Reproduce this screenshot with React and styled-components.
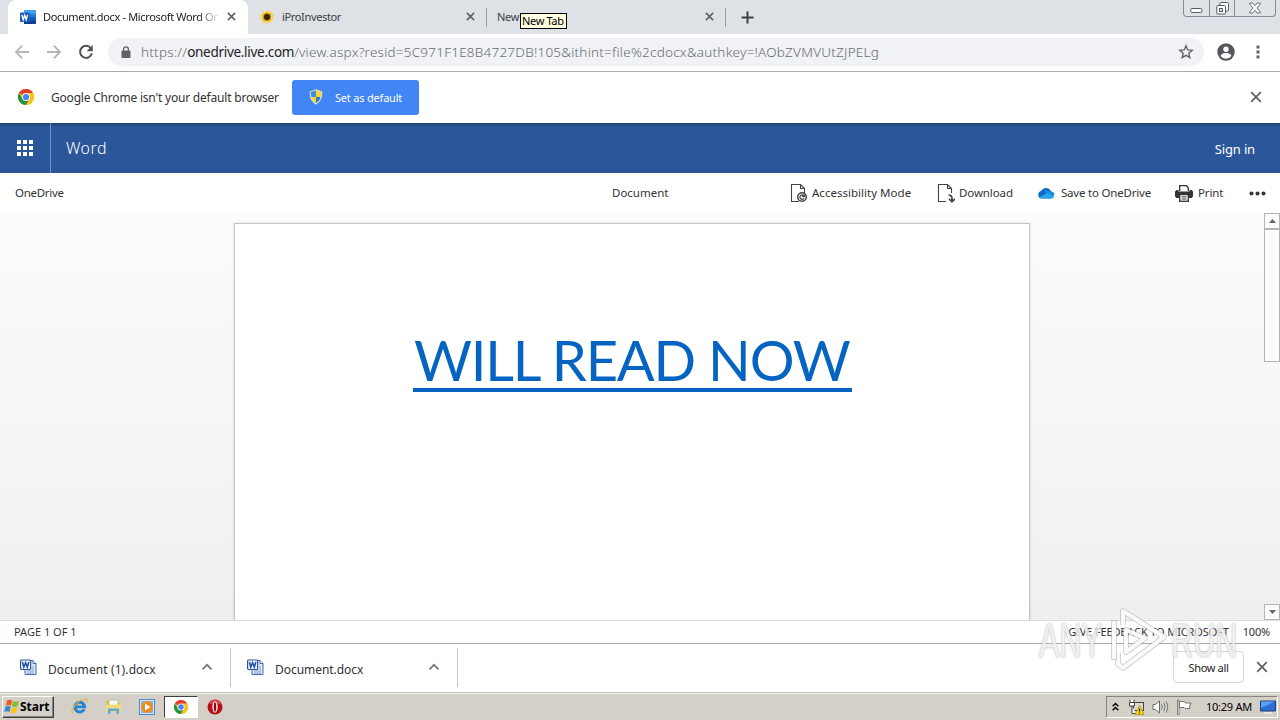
import React from 'react'
import styled, { createGlobalStyle } from 'styled-components'

const GlobalStyle = createGlobalStyle`
  * {
    box-sizing: border-box;
  }
  body {
    margin: 0;
    overflow: hidden;
    background: #fff;
    font-family: 'Noto Sans', 'Open Sans', sans-serif;
  }
  svg {
    display: block;
    flex: none;
  }
`

const WordIcon = () => (
  <svg width='16' height='16' viewBox='0 0 16 16'>
    <rect x='4' y='1' width='12' height='14' rx='1' fill='#2b7cd3' />
    <path d='M4 1h11a1 1 0 0 1 1 1v2.5H4z' fill='#41a5ee' />
    <path d='M4 8h12v3.500H4z' fill='#185abd' />
    <path d='M4 11.500h12V14a1 1 0 0 1-1 1H4z' fill='#103f91' />
    <rect x='0' y='3.500' width='9.500' height='9.500' rx='.8' fill='#185abd' />
    <path
      d='M1.800 5.800l1.400 5 1.500-4.600 1.500 4.600 1.400-5'
      fill='none'
      stroke='#fff'
      strokeWidth='1.300'
    />
  </svg>
)

const FlowerIcon = () => (
  <svg width='14' height='14' viewBox='0 0 14 14'>
    <path
      d='M7 0l1.600 2 2.600-.8.4 2.500 2.200 1-1 2.300 1 2.500-2.400.9-.6 2.400-2.400-.6L7 14l-1.700-1.700-2.500.4-.3-2.500-2.300-1L1.200 7l-1-2.400 2.400-.9.3-2.500 2.500.7z'
      fill='#f8cf4a'
    />
    <circle cx='7' cy='7' r='4' fill='#c58a1c' />
    <circle cx='7' cy='7' r='3' fill='#33240c' />
  </svg>
)

const CloseIcon = ({ size = 9, color = '#5f6368', weight = 1.8 }) => (
  <svg width={size} height={size} viewBox='0 0 10 10'>
    <path d='M1 1l8 8M9 1l-8 8' stroke={color} strokeWidth={weight} />
  </svg>
)

const ArrowIcon = ({ flip }) => (
  <svg width='16' height='16' viewBox='0 0 16 16'>
    <path
      d='M15 8H2M8.200 1.700L1.900 8l6.300 6.300'
      transform={flip ? 'rotate(180 8 8)' : undefined}
      fill='none'
      stroke='#b4b6b9'
      strokeWidth='1.800'
    />
  </svg>
)

const ReloadIcon = () => (
  <svg width='16' height='16' viewBox='0 0 16 16'>
    <path
      d='M12.900 4.300A6 6 0 1 0 13.900 9.300'
      fill='none'
      stroke='#505357'
      strokeWidth='2'
    />
    <path d='M14.800 1v6.200H8.600z' fill='#505357' />
  </svg>
)

const LockIcon = () => (
  <svg width='10' height='13' viewBox='0 0 10 13'>
    <rect x='.5' y='4.500' width='9' height='7.500' rx='1' fill='#5f6368' />
    <path
      d='M2.600 5V3.300a2.400 2.400 0 0 1 4.800 0V5'
      fill='none'
      stroke='#5f6368'
      strokeWidth='1.300'
    />
  </svg>
)

const StarIcon = () => (
  <svg width='16' height='16' viewBox='0 0 16 16'>
    <path
      d='M8 1.800l1.700 4.100 4.500.4-3.400 2.900 1 4.400L8 11.300l-3.800 2.300 1-4.400L1.800 6.300l4.500-.4z'
      fill='none'
      stroke='#5f6368'
      strokeWidth='1.400'
    />
  </svg>
)

const ProfileIcon = () => (
  <svg width='18' height='18' viewBox='0 0 18 18'>
    <circle cx='9' cy='9' r='8.700' fill='#54575b' />
    <circle cx='9' cy='6.200' r='2.700' fill='#fff' />
    <path d='M3.600 13c.4-2.300 3.400-3 5.400-3s5 .7 5.400 3A6.600 6.600 0 0 1 9 15.700 6.600 6.600 0 0 1 3.600 13z' fill='#fff' />
  </svg>
)

const ChromeIcon = ({ size = 16 }) => (
  <svg width={size} height={size} viewBox='0 0 16 16'>
    <circle cx='8' cy='8' r='8' fill='#fbc116' />
    <path d='M8 8L1.070 4A8 8 0 0 1 14.930 4z' fill='#e33b2e' />
    <path d='M1.070 4A8 8 0 0 0 8 16l3.500-6H4.500z' fill='#229342' />
    <path d='M8 4h6.930A8 8 0 0 1 8 16l3.460-6z' fill='#fbc116' />
    <circle cx='8' cy='8' r='4' fill='#fff' />
    <circle cx='8' cy='8' r='3.100' fill='#4285f4' />
  </svg>
)

const ShieldIcon = () => (
  <svg width='14' height='16' viewBox='0 0 14 16'>
    <path d='M7 .8L1.200 2.800c-.3 6 1.500 9.500 5.800 12.200z' fill='#3f8ce8' />
    <path d='M7 .8l5.800 2c.3 6-1.500 9.500-5.800 12.200z' fill='#fbd62e' />
    <path d='M1.200 8H7v7C3.600 13 1.800 10.800 1.200 8z' fill='#fbd62e' />
    <path d='M7 8h5.800c-.6 2.800-2.400 5-5.800 7z' fill='#3579d0' />
    <path
      d='M7 .8l5.800 2c.3 6-1.500 9.500-5.800 12.200C2.700 12.300.9 8.800 1.200 2.800z'
      fill='none'
      stroke='#d9e3c8'
      strokeWidth='1.100'
    />
  </svg>
)

const PageShape = () => (
  <path
    d='M9 17.500H1.500V.5h9l4 4V9M10.500.5v4h4'
    fill='none'
    stroke='#444'
    strokeWidth='1.100'
  />
)

const AccessibilityIcon = () => (
  <svg width='18' height='19' viewBox='0 0 18 19'>
    <PageShape />
    <circle cx='12' cy='13' r='4.300' fill='#fff' stroke='#444' strokeWidth='1.500' />
    <path d='M14 12a2.200 2.200 0 1 0 0 2.200M14.300 10.500v2h-2.200' fill='none' stroke='#444' strokeWidth='1.300' />
  </svg>
)

const DownloadIcon = () => (
  <svg width='18' height='19' viewBox='0 0 18 19'>
    <PageShape />
    <path d='M11.500 11c2.300 0 3.500 1.500 3.500 3.500v3M12 14.800l3 3 3-3' fill='none' stroke='#444' strokeWidth='1.700' />
  </svg>
)

const CloudIcon = () => (
  <svg width='18' height='12' viewBox='0 0 18 12'>
    <path d='M4 11.500a4 4 0 0 1 0-7.600A5.600 5.600 0 0 1 14 4.500a3.700 3.700 0 0 1 .3 7z' fill='#0f6cc4' />
    <path d='M6 3.500l8 1.100a3.700 3.700 0 0 1 3.500 3.200L14 9z' fill='#1490df' />
    <path d='M2 10.800L10 6l7.400 3.700a3.600 3.600 0 0 1-3.100 1.800H4a4 4 0 0 1-2-.7z' fill='#28a8ea' />
  </svg>
)

const PrintIcon = () => (
  <svg width='18' height='17' viewBox='0 0 18 17'>
    <path d='M4.700 6V.7h6.600l2 2V6' fill='#fff' stroke='#333' strokeWidth='1.300' />
    <path d='M1.500 5h2v1.500h11V5h2L18 6.500v5L16.500 13H14v-2.500H4V13H1.500L0 11.500v-5z' fill='#333' />
    <rect x='4.700' y='9.500' width='8.600' height='6.800' fill='#fff' stroke='#333' strokeWidth='1.300' />
    <path d='M6.500 11.800h5M6.500 14h5' stroke='#333' />
  </svg>
)

const DocIcon = () => (
  <svg width='17' height='17' viewBox='0 0 17 17'>
    <path d='M5 1.500h8l3 3v11H5z' fill='#dce8f8' stroke='#4468a8' />
    <path d='M13 1.500v3h3' fill='#fff' stroke='#4468a8' />
    <path d='M7 12h7M7 14h7M12 8h2M12 10h2' stroke='#7da2db' />
    <rect x='.6' y='1' width='10' height='9.500' rx='1' fill='#f3f7ff' stroke='#2b579a' strokeWidth='1.200' />
    <path d='M2.500 3l1.300 5.300L5.600 3.600l1.700 4.700L8.800 3' fill='none' stroke='#1d4fa3' strokeWidth='1.500' />
  </svg>
)

const ChevronIcon = () => (
  <svg width='12' height='8' viewBox='0 0 12 8'>
    <path d='M1.500 6.300L6 1.800l4.500 4.500' fill='none' stroke='#74777a' strokeWidth='1.700' />
  </svg>
)

const WindowsIcon = () => (
  <svg width='16' height='15' viewBox='0 0 16 15'>
    <path d='M3 1.500c1.800-1.200 3.500-1 5.200 0L7 6.700c-1.700-1-3.400-1-5.200 0z' fill='#ef5a24' />
    <path d='M9 2c1.800 1 3.600 1 5.800-.2L13.500 7c-2 1.200-3.800 1-5.600.2z' fill='#7cbd31' />
    <path d='M1.500 7.700c1.800-1.100 3.500-1 5.200 0L5.400 13c-1.700-1-3.400-1-5.200 0z' fill='#2f86dc' />
    <path d='M7.600 8.200c1.800 1 3.600 1 5.600-.2l-1.300 5.200c-2 1.200-3.800 1-5.600.2z' fill='#f9c513' />
  </svg>
)

const IEIcon = () => (
  <svg width='17' height='17' viewBox='0 0 17 17'>
    <path d='M13.200 11.300A4.900 4.900 0 1 1 13.700 8.900H4.500' fill='none' stroke='#2583d6' strokeWidth='2.900' />
    <path d='M1.800 15.500C-1.500 12.500 8 .8 14.700 1c1.800.1 1.500 2 .6 3.500' fill='none' stroke='#e8b52c' strokeWidth='1.200' />
  </svg>
)

const FolderIcon = () => (
  <svg width='17' height='16' viewBox='0 0 17 16'>
    <path d='M1 2h5l1.500 2H16v9H1z' fill='#e0b94c' />
    <path d='M4 1h9v6H4z' fill='#f7fbf0' stroke='#9cc28a' strokeWidth='.8' />
    <path d='M1 5.500h15V13H1z' fill='#f5da7c' />
    <path d='M3 15V9.500h11V15h-2.500v-3h-6v3z' fill='#5faadb' />
  </svg>
)

const PlayerIcon = () => (
  <svg width='16' height='16' viewBox='0 0 16 16'>
    <rect x='.5' y='.5' width='15' height='15' fill='#cfe5fa' stroke='#4d8ccc' />
    <rect x='2' y='2' width='12' height='12' fill='#83b6e8' />
    <circle cx='8' cy='8' r='5.900' fill='#f18a1c' />
    <path d='M6 4.500L11.500 8 6 11.500z' fill='#fff' />
  </svg>
)

const OperaIcon = () => (
  <svg width='16' height='16' viewBox='0 0 16 16'>
    <circle cx='8' cy='8' r='7.500' fill='#b80f17' />
    <path d='M2 5a6.500 6.500 0 0 1 12 0z' fill='#d8474e' />
    <ellipse cx='8' cy='8' rx='2.700' ry='5.700' fill='#f7e8e8' />
    <ellipse cx='8' cy='8' rx='1.200' ry='4.800' fill='#8e0a10' />
  </svg>
)

const NetworkIcon = () => (
  <svg width='17' height='16' viewBox='0 0 17 16'>
    <rect x='5.500' y='3.500' width='10' height='8' fill='#d9d9d6' stroke='#444' />
    <path d='M2 .5v3h4v-3M1.500 3.500h5V7h-5zM4 7v7.500h4' fill='#fff' stroke='#444' />
    <path d='M11.500 6.500l4.500 9H7z' fill='#ffd91c' stroke='#b69000' strokeWidth='.8' />
    <path d='M11.500 9.500v3M11.500 13.500v1' stroke='#222' strokeWidth='1.300' />
  </svg>
)

const SpeakerIcon = () => (
  <svg width='17' height='16' viewBox='0 0 17 16'>
    <path d='M1 5.500h2.500L7.500 2v12L3.500 10.500H1z' fill='#fff' stroke='#666' />
    <path d='M9.500 5.500q1.600 2.500 0 5M11.800 3.800q2.600 4.200 0 8.400M14 2.300q3.500 5.700 0 11.400' fill='none' stroke='#777' />
  </svg>
)

const FlagIcon = () => (
  <svg width='17' height='16' viewBox='0 0 17 16'>
    <path d='M1.500 1h1.500v14.500H1.500z' fill='#fff' stroke='#666' strokeWidth='.8' />
    <path d='M3.500 2.500h5l1 1.500h5.500l-1.500 3 .5 2.500h-5L8 8.500H3.500z' fill='#fff' stroke='#666' strokeWidth='.9' />
  </svg>
)

const DesktopIcon = () => (
  <svg width='16' height='14' viewBox='0 0 16 14'>
    <path d='M.5 1h15v10H.5z' fill='#2a6fd0' stroke='#1c3f7c' />
    <path d='M1 1.500h14L1 8z' fill='#5ba0ee' />
    <path d='M4 13h8' stroke='#eef2f6' strokeWidth='1.500' />
  </svg>
)

const PlayMark = () => (
  <svg width='60' height='68' viewBox='0 0 60 68'>
    <g fill='none' strokeLinejoin='round'>
      <path d='M15 19V5l41 26-41 31-5-4V47M18 24l19 8-19 14z' stroke='rgba(170,170,170,.5)' strokeWidth='6' />
      <path d='M15 19V5l41 26-41 31-5-4V47M18 24l19 8-19 14z' stroke='#fafafa' strokeWidth='4' />
      <path d='M6 14v40' stroke='rgba(170,170,170,.5)' strokeWidth='6' />
      <path d='M6 15v38' stroke='#fafafa' strokeWidth='4' />
    </g>
  </svg>
)

const App = () => {
  return (
    <Screen>
      <GlobalStyle />
      <TabStrip>
        <Tab $active $width={240}>
          <WordIcon />
          <TabTitle $faded>Document.docx - Microsoft Word Online</TabTitle>
          <CloseIcon />
        </Tab>
        <Tab $width={239}>
          <FlowerIcon />
          <TabTitle>iProInvestor</TabTitle>
          <CloseIcon />
        </Tab>
        <Tab $width={239} $divided>
          <TabTitle>New Tab</TabTitle>
          <CloseIcon />
        </Tab>
        <NewTab>
          <svg width='13' height='13' viewBox='0 0 13 13'>
            <path d='M6.500 .5v12M.5 6.500h12' stroke='#3c4043' strokeWidth='2' />
          </svg>
        </NewTab>
        <Tooltip>New Tab</Tooltip>
        <WindowButtons>
          <WindowButton $width={25}>
            <svg width='13' height='16' viewBox='0 0 13 16'>
              <rect x='.8' y='8.500' width='11' height='4' rx='1' fill='#fff' stroke='#555b66' />
            </svg>
          </WindowButton>
          <WindowButton $width={25}>
            <svg width='13' height='16' viewBox='0 0 13 16'>
              <rect x='4' y='2.500' width='8.500' height='8.500' rx='1' fill='#fff' stroke='#555b66' />
              <rect x='.8' y='5.500' width='8.700' height='8.500' rx='1' fill='#fff' stroke='#555b66' />
              <rect x='3.500' y='8.500' width='3' height='3' fill='#dee1e6' stroke='#555b66' />
            </svg>
          </WindowButton>
          <WindowButton $width={41}>
            <svg width='12' height='16' viewBox='0 0 12 16'>
              <path
                d='M.8 3h3L6 5.700 8.200 3h3v1.200L8 8l3.200 3.800V13h-3L6 10.300 3.800 13h-3v-1.200L4 8 .8 4.200z'
                fill='#fff'
                stroke='#555b66'
                strokeWidth='.9'
              />
            </svg>
          </WindowButton>
        </WindowButtons>
      </TabStrip>
      <Toolbar>
        <ArrowIcon />
        <ArrowIcon flip />
        <ReloadIcon />
        <AddressBar>
          <LockIcon />
          <Url>
            https://<b>onedrive.live.com</b>
            /view.aspx?resid=5C971F1E8B4727DB!105&amp;ithint=file%2cdocx&amp;authkey=!AObZVMVUtZJPELg
          </Url>
          <StarIcon />
        </AddressBar>
        <ProfileIcon />
        <MenuDots width='4' height='14' viewBox='0 0 4 14'>
          <path d='M.5 .5h3v3h-3zM.5 5.500h3v3h-3zM.5 10.500h3v3h-3z' fill='#5f6368' />
        </MenuDots>
      </Toolbar>
      <InfoBar>
        <ChromeIcon />
        <InfoText>Google Chrome isn't your default browser</InfoText>
        <DefaultButton>
          <ShieldIcon />
          Set as default
        </DefaultButton>
        <CloseIcon size={12} weight={1.5} />
      </InfoBar>
      <AppHeader>
        <Launcher>
          <svg width='16' height='16' viewBox='0 0 16 16'>
            <path
              d='M0 0h4v4H0zM6 0h4v4H6zM12 0h4v4h-4zM0 6h4v4H0zM6 6h4v4H6zM12 6h4v4h-4zM0 12h4v4H0zM6 12h4v4H6zM12 12h4v4h-4z'
              fill='#fff'
            />
          </svg>
        </Launcher>
        <AppName>Word</AppName>
        <SignIn>Sign in</SignIn>
      </AppHeader>
      <CommandBar>
        <Label $width={597} $spacing={-0.3}>OneDrive</Label>
        <Label $width={178}>Document</Label>
        <Command $width={147}>
          <AccessibilityIcon />
          <Label $spacing={0.02}>Accessibility Mode</Label>
        </Command>
        <Command $width={100}>
          <DownloadIcon />
          <Label $spacing={-0.1}>Download</Label>
        </Command>
        <Command $width={138} $gap={6}>
          <CloudIcon />
          <Label $spacing={-0.2}>Save to OneDrive</Label>
        </Command>
        <Command $width={74} $gap={5}>
          <PrintIcon />
          <Label $spacing={-0.15}>Print</Label>
        </Command>
        <svg width='17' height='5' viewBox='0 0 17 5'>
          <g fill='#333'>
            <circle cx='2.500' cy='2.500' r='2' />
            <circle cx='8.500' cy='2.500' r='2' />
            <circle cx='14.500' cy='2.500' r='2' />
          </g>
        </svg>
      </CommandBar>
      <Canvas>
        <Paper>
          <Heading>WILL READ NOW</Heading>
        </Paper>
        <Scrollbar>
          <ScrollButton>
            <svg width='7' height='4' viewBox='0 0 7 4'>
              <path d='M0 4L3.500 0 7 4z' fill='#666' />
            </svg>
          </ScrollButton>
          <ScrollThumb />
          <ScrollButton>
            <svg width='7' height='4' viewBox='0 0 7 4'>
              <path d='M0 0l3.500 4L7 0z' fill='#666' />
            </svg>
          </ScrollButton>
        </Scrollbar>
      </Canvas>
      <StatusBar>
        <span>PAGE 1 OF 1</span>
        <Feedback>GIVE FEEDBACK TO MICROSOFT</Feedback>
        <Zoom>100%</Zoom>
      </StatusBar>
      <Shelf>
        <Download $width={231} $spacing={0.1}>
          <DocIcon />
          <span>Document (1).docx</span>
          <ChevronIcon />
        </Download>
        <Download $width={227} $spacing={-0.05}>
          <DocIcon />
          <span>Document.docx</span>
          <ChevronIcon />
        </Download>
        <ShowAll>Show all</ShowAll>
        <CloseIcon size={12} weight={1.5} />
      </Shelf>
      <Taskbar>
        <StartButton>
          <WindowsIcon />
          Start
        </StartButton>
        <Task>
          <IEIcon />
        </Task>
        <Task>
          <FolderIcon />
        </Task>
        <Task>
          <PlayerIcon />
        </Task>
        <Task $active>
          <ChromeIcon size={14} />
        </Task>
        <Task>
          <OperaIcon />
        </Task>
        <Tray>
          <svg width='7' height='10' viewBox='0 0 7 10'>
            <path d='M.7 4.300l2.800-2.800 2.800 2.800M.7 8.300l2.800-2.800 2.800 2.800' fill='none' stroke='#000' strokeWidth='1.500' />
          </svg>
          <TrayIcons>
            <NetworkIcon />
            <SpeakerIcon />
            <FlagIcon />
          </TrayIcons>
          <Clock>10:29 AM</Clock>
          <DesktopIcon />
        </Tray>
      </Taskbar>
      <Watermark>
        <MarkText $width={66}>ANY</MarkText>
        <PlayMark />
        <MarkText $width={66}>RUN</MarkText>
      </Watermark>
    </Screen>
  )
}

const Screen = styled.div`
  position: relative;
  display: flex;
  flex-direction: column;
  width: 1280px;
  height: 720px;
  overflow: hidden;
  color: #333;
  white-space: nowrap;
`

const TabStrip = styled.div`
  position: relative;
  display: flex;
  height: 34px;
  padding-left: 8px;
  background: #dee1e6;
`

const Tab = styled.div`
  position: relative;
  display: flex;
  align-items: center;
  width: ${(props) => props.$width}px;
  padding: 0 12px 1px ${(props) => (props.$divided ? 10 : 12)}px;
  background: ${(props) => (props.$active ? '#fff' : 'transparent')};
  border-radius: 8px 8px 0 0;
  &::before,
  &::after {
    content: '';
    position: absolute;
    top: 8px;
    width: ${(props) => (props.$divided ? 1 : 0)}px;
    height: 19px;
    background: #9a9da3;
  }
  &::before {
    left: -1px;
  }
  &::after {
    right: 0;
  }
`

const TabTitle = styled.span`
  flex: 1;
  margin: 0 14px 0 8px;
  ${Tab}:nth-child(3) & {
    margin-left: 0;
  }
  overflow: hidden;
  font-size: 11px;
  letter-spacing: -0.35px;
  color: #3c4043;
  ${(props) =>
    props.$faded &&
    'margin: 0 9px 0 7px; color: #222; mask-image: linear-gradient(90deg, #000 155px, transparent 177px);'}
`

const NewTab = styled.div`
  display: flex;
  align-items: center;
  padding-left: 15px;
`

const Tooltip = styled.div`
  position: absolute;
  left: 520px;
  top: 13px;
  width: 47px;
  height: 16px;
  padding-left: 1px;
  border: 1px solid #000;
  background: #ffffe1;
  color: #000;
  font-size: 11px;
  line-height: 14px;
  letter-spacing: -0.35px;
`

const WindowButtons = styled.div`
  display: flex;
  margin-left: auto;
  margin-right: 4px;
  height: 17px;
  border: 1px solid #858a96;
  border-top: 0;
  border-radius: 0 0 4px 4px;
`

const WindowButton = styled.div`
  display: flex;
  justify-content: center;
  width: ${(props) => props.$width}px;
  & + & {
    border-left: 1px solid #858a96;
  }
`

const Toolbar = styled.div`
  display: flex;
  align-items: center;
  gap: 16px;
  height: 38px;
  padding: 0 20px 1px 14px;
  border-bottom: 1px solid #aaadaf;
  background: #fff;
`

const AddressBar = styled.div`
  display: flex;
  align-items: center;
  flex: 1;
  height: 28px;
  margin: 0 -3px 0 -2px;
  padding: 0 10px 0 13px;
  border-radius: 14px;
  background: #f0f2f5;
`

const MenuDots = styled.svg`
  margin-left: 5px;
`

const Url = styled.span`
  flex: 1;
  margin: -1px 0 0 10px;
  color: #686c71;
  font-size: 13.5px;
  font-weight: 300;
  letter-spacing: 0.23px;
  b {
    color: #202124;
    font-weight: 400;
    letter-spacing: -0.29px;
  }
`

const InfoBar = styled.div`
  display: flex;
  align-items: center;
  height: 51px;
  padding: 0 18px 1px;
  background: #fff;
`

const InfoText = styled.span`
  width: 241px;
  margin-left: 17px;
  font-size: 12px;
  letter-spacing: -0.2px;
`

const DefaultButton = styled.button`
  display: flex;
  align-items: center;
  gap: 12px;
  width: 127px;
  height: 35px;
  margin-right: auto;
  padding: 0 0 0 17px;
  border: 0;
  border-radius: 3px;
  background: #4285f4;
  color: #fff;
  font: 11px 'Noto Sans', sans-serif;
  letter-spacing: -0.2px;
`

const AppHeader = styled.header`
  display: flex;
  align-items: center;
  height: 50px;
  background: linear-gradient(#1f3f70, #2b579a 4px);
  color: #fff;
`

const Launcher = styled.div`
  display: flex;
  align-items: center;
  width: 51px;
  height: 50px;
  padding-left: 17px;
  border-right: 1px solid #7291c0;
`

const AppName = styled.span`
  margin-left: 15px;
  font-size: 16px;
  font-weight: 300;
  letter-spacing: 0.5px;
`

const SignIn = styled.span`
  margin: 1px 25px 0 auto;
  font-size: 13px;
  letter-spacing: -0.15px;
`

const CommandBar = styled.div`
  display: flex;
  align-items: center;
  height: 40px;
  padding-left: 15px;
  background: #fff;
`

const Label = styled.span`
  width: ${(props) => (props.$width ? props.$width + 'px' : 'auto')};
  padding-bottom: 2px;
  font-size: 11.5px;
  letter-spacing: ${(props) => props.$spacing || 0}px;
`

const Command = styled.div`
  display: flex;
  align-items: center;
  gap: ${(props) => props.$gap || 4}px;
  width: ${(props) => props.$width}px;
`

const Canvas = styled.main`
  display: flex;
  justify-content: space-between;
  height: 407px;
  padding-left: 234px;
  background: linear-gradient(#fcfcfc, #efefef);
`

const Paper = styled.div`
  width: 796px;
  margin-top: 10px;
  padding: 103px 0 0 178px;
  border: 1px solid #c6c6c6;
  border-bottom: 0;
  background: #fff;
  box-shadow: 0 0 3px rgba(0, 0, 0, 0.12);
`

const Heading = styled.h1`
  width: 439px;
  height: 65px;
  margin: 0;
  padding-left: 1px;
  border-bottom: 4px solid #0563c1;
  color: #0563c1;
  font-family: Lato, sans-serif;
  font-size: 56px;
  font-weight: 400;
  line-height: 66px;
  letter-spacing: -1.2px;
`

const Scrollbar = styled.div`
  display: flex;
  flex-direction: column;
  width: 16px;
`

const ScrollButton = styled.div`
  display: grid;
  place-items: center;
  height: 16px;
  border: 1px solid #b5b5b5;
  background: #fbfbfb;
  &:last-child {
    margin-top: auto;
  }
`

const ScrollThumb = styled.div`
  height: 133px;
  border: 1px solid #b5b5b5;
  background: #fcfcfc;
`

const StatusBar = styled.div`
  display: flex;
  align-items: center;
  height: 24px;
  padding: 0 10px 1px 14px;
  border-top: 1px solid #dcdcdc;
  border-bottom: 1px solid #aaa;
  background: #fff;
  font-size: 11px;
`

const Feedback = styled.span`
  margin-left: auto;
  letter-spacing: -0.12px;
`

const Zoom = styled.span`
  margin-left: 14px;
  letter-spacing: -0.2px;
`

const Shelf = styled.div`
  display: flex;
  align-items: center;
  height: 48px;
  padding: 0 12px 2px 0;
  background: #fff;
`

const Download = styled.div`
  display: flex;
  align-items: center;
  width: ${(props) => props.$width}px;
  height: 39px;
  padding: 0 17px 0 20px;
  border-right: 1px solid #c8c8c8;
  font-size: 12px;
  letter-spacing: ${(props) => props.$spacing}px;
  & + & {
    padding-left: 16px;
  }
  span {
    flex: 1;
    margin: 4px 0 0 11px;
  }
`

const ShowAll = styled.button`
  width: 71px;
  height: 32px;
  margin: 0 12px 0 auto;
  padding: 0;
  border: 1px solid #d5d7da;
  border-radius: 4px;
  background: #fff;
  color: #222;
  font: 11px 'Noto Sans', sans-serif;
  letter-spacing: -0.35px;
`

const Taskbar = styled.footer`
  display: flex;
  align-items: center;
  height: 28px;
  padding: 0 2px 0 2px;
  border-top: 1px solid #c0c0bc;
  background: #d4cfc7;
  box-shadow: inset 0 1px #f3f2ef;
`

const StartButton = styled.div`
  display: flex;
  align-items: center;
  width: 52px;
  height: 22px;
  margin-right: 9px;
  padding-left: 1px;
  border: 1px solid;
  border-color: #fff #404040 #404040 #fff;
  box-shadow: inset -1px -1px #87847e;
  color: #000;
  font-size: 12px;
  font-weight: 700;
`

const Task = styled.div`
  display: grid;
  place-items: center;
  width: 33.7px;
  height: 22px;
  border: 1px solid transparent;
  ${(props) =>
    props.$active && 'border-color: #404040 #fff #fff #404040; background: #fff;'}
`

const Tray = styled.div`
  display: flex;
  align-items: center;
  width: 172px;
  height: 22px;
  margin-left: auto;
  padding: 0 1px 0 5px;
  border: 1px solid;
  border-color: #87847e #fff #fff #87847e;
`

const TrayIcons = styled.div`
  display: flex;
  gap: 7px;
  margin-left: 9px;
`

const Clock = styled.span`
  margin: 0 8px 0 auto;
  color: #000;
  font-size: 11px;
  letter-spacing: -0.25px;
`

const Watermark = styled.div`
  position: absolute;
  left: 1039px;
  top: 606px;
  display: flex;
  align-items: center;
  gap: 3px;
  pointer-events: none;
`

const MarkText = styled.span`
  width: ${(props) => props.$width}px;
  color: rgba(255, 255, 255, 0.75);
  font: 48px 'Liberation Sans', sans-serif;
  transform: scaleX(0.64);
  transform-origin: 0 50%;
  -webkit-text-stroke: 1px rgba(225, 225, 225, 0.7);
  text-shadow: 0 0 3px rgba(120, 120, 120, 0.55);
`

export default App
